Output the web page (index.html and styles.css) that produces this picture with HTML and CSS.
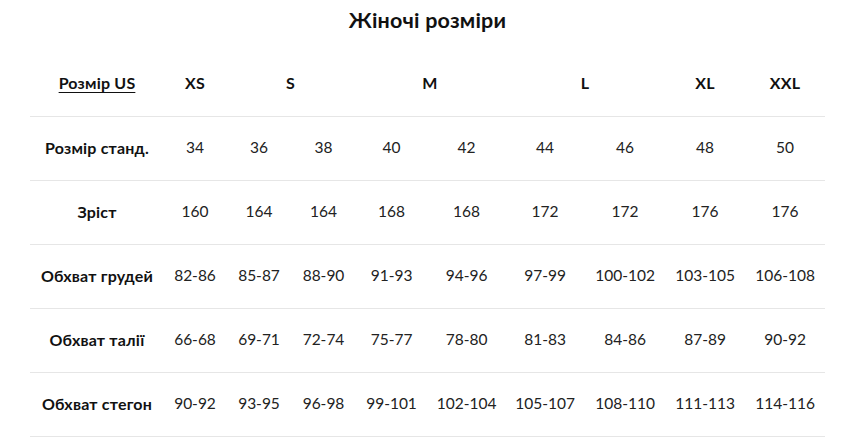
FILE: index.html
```html
<!DOCTYPE html>
<html lang="uk">
<head>
<meta charset="utf-8">
<title>Жіночі розміри</title>
<link rel="stylesheet" href="styles.css">
</head>
<body>
<div class="page">
  <h1 class="title">Жіночі розміри</h1>
  <table class="sizes">
    <colgroup>
      <col class="c-label"><col class="c1"><col class="c2"><col class="c3"><col class="c4"><col class="c5"><col class="c6"><col class="c7"><col class="c8"><col class="c9">
    </colgroup>
    <thead>
      <tr>
        <th class="label"><u>Розмір US</u></th>
        <th>XS</th>
        <th colspan="2">S</th>
        <th colspan="2">M</th>
        <th colspan="2">L</th>
        <th>XL</th>
        <th>XXL</th>
      </tr>
    </thead>
    <tbody>
      <tr><th class="label">Розмір станд.</th><td>34</td><td>36</td><td>38</td><td>40</td><td>42</td><td>44</td><td>46</td><td>48</td><td>50</td></tr>
      <tr><th class="label">Зріст</th><td>160</td><td>164</td><td>164</td><td>168</td><td>168</td><td>172</td><td>172</td><td>176</td><td>176</td></tr>
      <tr><th class="label">Обхват грудей</th><td>82-86</td><td>85-87</td><td>88-90</td><td>91-93</td><td>94-96</td><td>97-99</td><td>100-102</td><td>103-105</td><td>106-108</td></tr>
      <tr><th class="label">Обхват талії</th><td>66-68</td><td>69-71</td><td>72-74</td><td>75-77</td><td>78-80</td><td>81-83</td><td>84-86</td><td>87-89</td><td>90-92</td></tr>
      <tr><th class="label">Обхват стегон</th><td>90-92</td><td>93-95</td><td>96-98</td><td>99-101</td><td>102-104</td><td>105-107</td><td>108-110</td><td>111-113</td><td>114-116</td></tr>
    </tbody>
  </table>
</div>
</body>
</html>
```
FILE: styles.css
```css
html, body {
  margin: 0;
  padding: 0;
  background: #ffffff;
}
body {
  font-family: Lato, "Noto Sans", sans-serif;
  color: #1a1a1a;
}
.page {
  padding: 0 26px 0 30px;
}
.title {
  margin: 0;
  padding-top: 6px;
  height: 52px;
  box-sizing: border-box;
  text-align: center;
  font-size: 21.5px;
  font-weight: 700;
  line-height: 28px;
  color: #111;
  letter-spacing: 0.2px;
}
.sizes {
  width: 795px;
  border-collapse: collapse;
  table-layout: fixed;
}
.c-label { width: 134px; }
.c1 { width: 62px; }
.c2 { width: 66px; }
.c3 { width: 63px; }
.c4 { width: 73px; }
.c5 { width: 77px; }
.c6, .c7, .c8, .c9 { width: 80px; }
.sizes th, .sizes td {
  height: 64px;
  padding: 0 0 2px 0;
  box-sizing: border-box;
  text-align: center;
  vertical-align: middle;
  border-bottom: 1px solid #e6e6e6;
  white-space: nowrap;
}
.sizes th {
  font-weight: 700;
  font-size: 16px;
  letter-spacing: 0.2px;
  color: #111;
}
.sizes td {
  font-weight: 400;
  color: #222;
  font-size: 15.5px;
}
.sizes u {
  text-decoration-thickness: 1px;
  text-underline-offset: 3px;
}
```
